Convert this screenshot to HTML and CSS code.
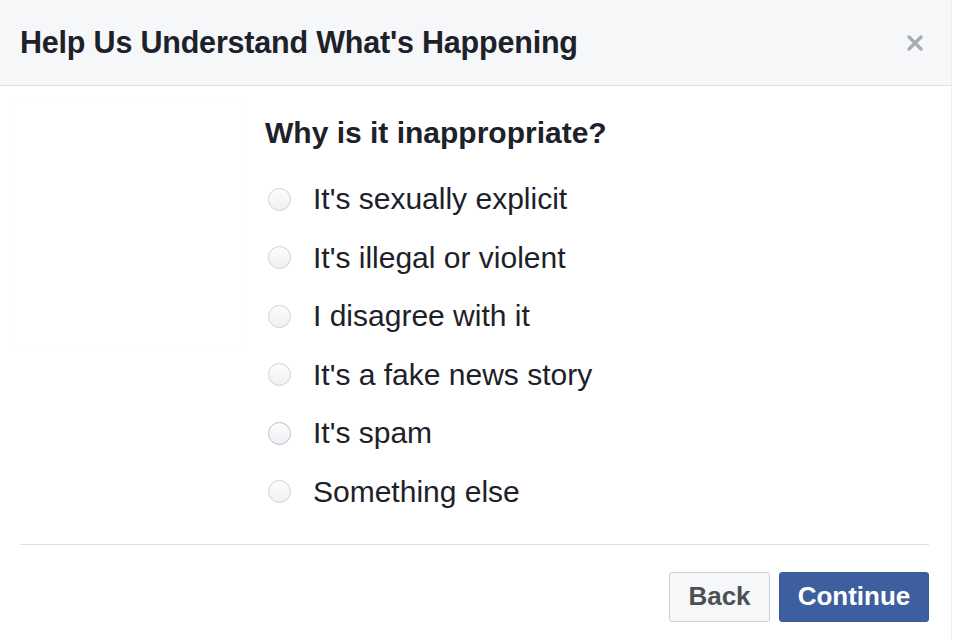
FILE: index.html
```html
<!DOCTYPE html>
<html lang="en">
<head>
<meta charset="utf-8">
<title>Help Us Understand What's Happening</title>
<link rel="stylesheet" href="styles.css">
</head>
<body>
<div class="dialog">
  <header class="dlg-head">
    <h1 class="dlg-title">Help Us Understand What's Happening</h1>
    <button class="dlg-close" aria-label="Close">
      <svg width="18" height="18" viewBox="0 0 18 18"><path d="M3 3 L15 15 M15 3 L3 15" stroke="#a9acb1" stroke-width="3.4" stroke-linecap="round"/></svg>
    </button>
  </header>
  <div class="dlg-body">
    <div class="aside"></div>
    <div class="form">
      <h2 class="question">Why is it inappropriate?</h2>
      <ul class="options">
        <li class="option"><span class="radio"></span>It's sexually explicit</li>
        <li class="option"><span class="radio"></span>It's illegal or violent</li>
        <li class="option"><span class="radio"></span>I disagree with it</li>
        <li class="option"><span class="radio"></span>It's a fake news story</li>
        <li class="option"><span class="radio focus"></span>It's spam</li>
        <li class="option"><span class="radio"></span>Something else</li>
      </ul>
    </div>
  </div>
  <div class="divider"></div>
  <footer class="dlg-foot">
    <button class="btn btn-back">Back</button>
    <button class="btn btn-primary">Continue</button>
  </footer>
</div>
</body>
</html>
```
FILE: styles.css
```css
* { box-sizing: border-box; }
html, body { margin: 0; padding: 0; background: #fff; }
body {
  font-family: "Liberation Sans", Arial, Helvetica, sans-serif;
  color: #1d2129;
  width: 954px;
  height: 640px;
  overflow: hidden;
}
.dialog {
  width: 952px;
  height: 640px;
  background: #fff;
  border-right: 1px solid #eceef1;
  display: flex;
  flex-direction: column;
}
.dlg-head {
  height: 86px;
  background: #f6f7f9;
  border-bottom: 1px solid #e0e2e6;
  display: flex;
  align-items: center;
  justify-content: space-between;
  padding: 0 27px 0 20px;
}
.dlg-title {
  margin: 0;
  font-size: 30.5px;
  font-weight: bold;
  color: #1d2129;
  letter-spacing: -0.2px;
}
.dlg-close {
  border: 0;
  background: transparent;
  padding: 0;
  width: 18px;
  height: 18px;
  display: flex;
}
.dlg-body {
  display: flex;
  padding-top: 14px;
}
.aside {
  width: 229px;
  height: 246px;
  margin-left: 14px;
  border: 1px solid #fbfbf8;
}
.form {
  margin-left: 22px;
  padding-top: 17px;
}
.question {
  margin: 0;
  font-size: 30px;
  font-weight: bold;
  line-height: 32px;
  color: #1d2129;
}
.options {
  list-style: none;
  margin: 34px 0 0;
  padding: 0;
  display: flex;
  flex-direction: column;
  gap: 26.5px;
}
.option {
  display: flex;
  align-items: center;
  height: 32px;
  font-size: 30px;
  color: #1d2129;
}
.radio {
  width: 23px;
  height: 23px;
  border-radius: 50%;
  border: 1px solid #cfd1d5;
  background: linear-gradient(#fdfdfd, #eff0f2);
  margin-left: 3px;
  margin-right: 22px;
  flex: none;
}
.radio.focus {
  border-color: #b3bdd9;
}
.divider {
  margin: 36px 22px 0 20px;
  height: 1px;
  background: #dddfe2;
}
.dlg-foot {
  display: flex;
  justify-content: flex-end;
  gap: 9px;
  padding: 27px 22px 0 0;
}
.btn {
  height: 50px;
  border-radius: 3px;
  font-family: "Liberation Sans", Arial, sans-serif;
  font-size: 26px;
  font-weight: bold;
  padding: 0;
}
.btn-back {
  width: 101px;
  background: #f6f7f9;
  border: 1px solid #ced0d4;
  color: #4b4f56;
}
.btn-primary {
  width: 150px;
  background: #3e5f9f;
  border: 1px solid #3a5a99;
  color: #fff;
}
```
